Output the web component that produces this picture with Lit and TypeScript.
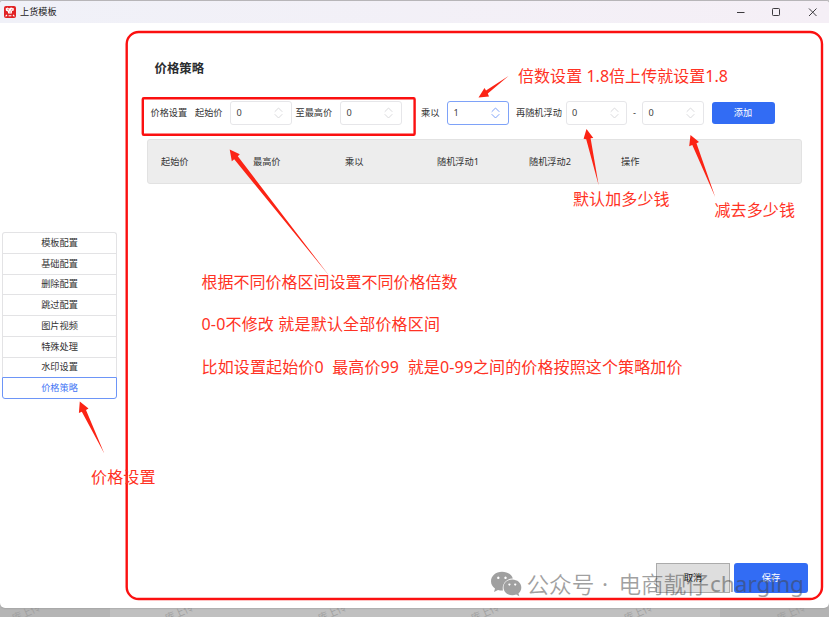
import { LitElement, html, svg, css } from "lit";
import { customElement, property } from "lit/decorators.js";

@customElement("number-box")
class NumberBox extends LitElement {
  @property() value = "0";
  @property({ type: Boolean, reflect: true }) active = false;

  static styles = css`
    :host {
      box-sizing: border-box;
      display: flex;
      align-items: center;
      justify-content: space-between;
      width: 61.5px;
      height: 24px;
      flex: none;
      padding: 0 7.5px 0 5.5px;
      border: 1px solid #e6e6e9;
      border-radius: 3px;
      background: #fff;
      color: #444;
      --arrow: #d9d9dc;
    }
    :host([active]) {
      border-color: #7ea2f8;
      --arrow: #7ea2f8;
    }
    .value {
      padding-top: 1px;
    }
    .arrows {
      width: 9px;
      height: 12px;
      fill: none;
      stroke: var(--arrow);
      stroke-width: 1;
    }
  `;

  render() {
    return html`<span class="value">${this.value}</span>
      <svg class="arrows" viewBox="0 0 9 12">
        <path d="M0.7 4.8 L4.5 1 L8.3 4.8 M0.7 7.2 L4.5 11 L8.3 7.2" />
      </svg>`;
  }
}

interface Note {
  x: number;
  y: number;
  width: number;
  text: string;
}

const MENU = ["模板配置", "基础配置", "删除配置", "跳过配置", "图片视频", "特殊处理", "水印设置", "价格策略"];
const COLUMNS = ["起始价", "最高价", "乘以", "随机浮动1", "随机浮动2", "操作"];
const NOTES: Note[] = [
  { x: 518, y: 82, width: 210, text: "倍数设置 1.8倍上传就设置1.8" },
  { x: 573, y: 205, width: 96.5, text: "默认加多少钱" },
  { x: 714.5, y: 216, width: 80.5, text: "减去多少钱" },
  { x: 201.5, y: 287.5, width: 256, text: "根据不同价格区间设置不同价格倍数" },
  { x: 201.5, y: 330, width: 238.5, text: "0-0不修改 就是默认全部价格区间" },
  { x: 201.5, y: 373, width: 481, text: "比如设置起始价0\u00a0 最高价99\u00a0 就是0-99之间的价格按照这个策略加价" },
  { x: 91, y: 483, width: 64.5, text: "价格设置" },
];
const ARROWS = [
  "M478.5 97.5 L484.5 88 L486 90.6 L508.5 76 L487.8 93.5 L489 96.5 Z",
  "M229.7 149.5 L239.8 154.2 L237.8 156.2 L329 275.5 L234.2 159.2 L231.8 161.2 Z",
  "M586.5 129 L593.3 138 L590.6 138.3 L598.7 185.5 L586.2 139.2 L583.6 138.8 Z",
  "M690.5 135 L699 142 L696.5 143.2 L715.2 197 L692.3 145 L689.2 146.2 Z",
  "M79.8 401.6 L88.5 408.6 L86 410 L104.3 453.5 L81.8 411.8 L78.9 413 Z",
];

@customElement("app-root")
class AppRoot extends LitElement {
  static styles = css`
    :host {
      display: block;
      position: relative;
      box-sizing: border-box;
      width: 829px;
      height: 617px;
      padding-top: 1px;
      overflow: hidden;
      background: linear-gradient(#c8c5c9 0 3px, #bdbdbd 3px);
      font-family: "Noto Sans", "Noto Sans CJK SC", sans-serif;
      font-size: 9.2px;
      line-height: 1.4;
      color: #333;
    }
    .backdrop {
      position: absolute;
      inset: 607px 0 0 0;
      width: 829px;
      height: 10px;
    }
    .shade {
      font-size: 10px;
      fill: #a0a0a0;
    }
    .window {
      position: relative;
      display: flex;
      flex-direction: column;
      height: 606.5px;
      overflow: hidden;
      background: #fff;
      border-radius: 3px 3px 5px 5px;
      box-shadow: 0 0 2px #888;
    }
    .titlebar {
      display: flex;
      align-items: center;
      height: 22px;
      flex: none;
      padding: 0 10px 0 4px;
      background: linear-gradient(90deg, #f0f1f8, #f5eff6);
      color: #222;
    }
    .logo {
      width: 12px;
      height: 12px;
      margin-right: 4px;
    }
    .controls {
      width: 82px;
      height: 12px;
      margin-left: auto;
      fill: none;
      stroke: #3c3a3e;
      stroke-width: 1;
    }
    .body {
      display: flex;
      flex: 1;
      min-height: 0;
    }
    .menu {
      box-sizing: border-box;
      display: flex;
      flex-direction: column;
      width: 115px;
      height: 167px;
      margin: 209px 0 0 2px;
      flex: none;
    }
    .item {
      box-sizing: border-box;
      display: flex;
      flex: 1;
      align-items: center;
      justify-content: center;
      padding-top: 1px;
      border: 1px solid #e3e3e5;
      border-bottom: none;
    }
    .item:first-child {
      border-radius: 3px 3px 0 0;
    }
    .item:last-child {
      border: 1px solid #6d95f7;
      border-radius: 0 0 3px 3px;
      color: #4476f5;
    }
    .page {
      display: flex;
      flex: 1;
      flex-direction: column;
      margin-left: 30px;
      padding: 36px 21px 14.5px 0;
    }
    .heading {
      margin: 0 0 0 7.5px;
      font-size: 12.4px;
      font-weight: 700;
      line-height: 20px;
      color: #2b2d30;
    }
    .form {
      display: flex;
      align-items: center;
      height: 24px;
      margin: 22px 0 14px;
      padding-left: 3.5px;
      white-space: nowrap;
    }
    .label {
      flex: none;
      padding-top: 1px;
    }
    .l1 { width: 44.5px; }
    .l2 { width: 35px; }
    .l3 { width: 44.5px; margin-left: 4px; }
    .l4 { width: 26px; margin-left: 19.5px; }
    .l5 { width: 49.5px; margin-left: 7.5px; }
    .dash { width: 15px; text-align: center; }
    .add {
      box-sizing: border-box;
      display: flex;
      align-items: center;
      justify-content: center;
      width: 63px;
      height: 22px;
      margin-left: 8px;
      padding-top: 1px;
      border-radius: 3px;
      background: #326cf4;
      color: #fff;
    }
    .thead {
      box-sizing: border-box;
      display: grid;
      grid-template-columns: repeat(6, 92px);
      align-items: center;
      width: 655px;
      height: 45px;
      padding: 2px 0 0 13px;
      border: 1px solid #e2e2e2;
      border-radius: 3px;
      background: #ededed;
    }
    .footer {
      display: flex;
      gap: 4px;
      justify-content: flex-end;
      margin-top: auto;
    }
    .btn {
      box-sizing: border-box;
      display: flex;
      align-items: center;
      justify-content: center;
      width: 74px;
      height: 30px;
      padding-top: 1px;
    }
    .cancel {
      border: 1px solid #ababab;
      background: #dedede;
      color: #111;
    }
    .save {
      border-radius: 3px;
      background: #326cf4;
      color: #fff;
    }
    .overlay {
      position: absolute;
      inset: 0;
      width: 829px;
      height: 617px;
      pointer-events: none;
    }
    .frame {
      fill: none;
      stroke: #fb1010;
      stroke-width: 2.4;
    }
    .note {
      font-size: 16px;
      fill: #ff3224;
    }
    .arrow {
      fill: #fb2415;
    }
    .mark {
      font-size: 22.6px;
      fill: #444;
    }
    .mark-cjk {
      font-family: "Noto Sans CJK SC", sans-serif;
      font-weight: 350;
    }
    .brand {
      opacity: 0.5;
    }
  `;

  render() {
    return html`
      <svg class="backdrop" viewBox="0 0 829 10">
        <rect width="110" height="10" fill="#b5b5b5" />
        <rect x="110" width="610" height="10" fill="#c0c0c0" />
        <rect x="720" width="109" height="10" fill="#b3b3b3" />
        ${[14, 167, 320, 473, 626, 779].map(
          (x) => svg`<text class="shade" transform="translate(${x} 15) rotate(-24)">库上传</text>`
        )}
      </svg>
      <div class="window">
        <div class="titlebar">
          <svg class="logo" viewBox="0 0 12 12">
            <rect width="12" height="12" rx="2" fill="#e12224" />
            <path d="M1.6 2.4 L3.6 1.4 L5 2.6 L7 1.6 L9.8 2.2 L9.8 4.4 L8 5 L7.8 7.4 L4.2 7.4 L3.8 5.4 L2 4.8 Z" fill="#fff" />
            <path d="M3.4 3.2 L5 4.2 M8.4 3.2 L6.8 4.4 M5.4 6 H6.8" stroke="#e12224" stroke-width="0.7" />
            <path d="M1.6 10.4 L3 8.8 M4.6 9.8 H7.4 M9 8.8 L10.4 10.4" fill="none" stroke="#fff" stroke-width="1.1" />
          </svg>
          <span>上货模板</span>
          <svg class="controls" viewBox="0 0 82 12">
            <path d="M0 6.5 H7.5 M72 2.5 L79.5 10 M79.5 2.5 L72 10" />
            <rect x="35.5" y="2.5" width="7" height="7" rx="0.8" />
          </svg>
        </div>
        <div class="body">
          <nav class="menu">${MENU.map((m) => html`<div class="item">${m}</div>`)}</nav>
          <main class="page">
            <h1 class="heading">价格策略</h1>
            <div class="form">
              <span class="label l1">价格设置</span>
              <span class="label l2">起始价</span>
              <number-box></number-box>
              <span class="label l3">至最高价</span>
              <number-box></number-box>
              <span class="label l4">乘以</span>
              <number-box value="1" active></number-box>
              <span class="label l5">再随机浮动</span>
              <number-box></number-box>
              <span class="label dash">-</span>
              <number-box></number-box>
              <span class="add">添加</span>
            </div>
            <div class="thead">${COLUMNS.map((c) => html`<span>${c}</span>`)}</div>
            <div class="footer">
              <div class="btn cancel">取消</div>
              <div class="btn save">保存</div>
            </div>
          </main>
        </div>
      </div>
      <svg class="overlay" viewBox="0 0 829 617">
        <rect class="frame" x="126.7" y="32" width="695.3" height="567" rx="12" />
        <rect class="frame" x="142.8" y="98.2" width="271.8" height="36.6" rx="1" />
        ${ARROWS.map((d) => svg`<path class="arrow" d=${d} />`)}
        ${NOTES.map(
          (n) => svg`<text class="note" x=${n.x} y=${n.y} textLength=${n.width}>${n.text}</text>`
        )}
        <g class="brand">
          <path
            fill="#444"
            fill-rule="evenodd"
            d="M502 571.8 C495.8 571.8 491 576 491 581.2 C491 584.2 492.5 586.7 495 588.5 L494 592 L498 589.9 C499.7 590.4 501.5 590.6 503 590.5 C501.5 584 506.5 578.4 512.8 578.6 C511.8 574.5 507.3 571.8 502 571.8 Z M498.3 576.6 a1.2 1.2 0 1 0 0.01 0 Z M505.5 576.6 a1.2 1.2 0 1 0 0.01 0 Z"
          />
          <path
            fill="#444"
            fill-rule="evenodd"
            d="M512.3 579.6 C507.3 579.6 503.5 583.2 503.5 587.4 C503.5 591.8 507.5 595.2 512.3 595.2 C513.7 595.2 515 594.9 516.2 594.5 L519.3 596.2 L518.5 593.3 C520.3 591.8 521.3 589.7 521.3 587.4 C521.3 583.2 517.3 579.6 512.3 579.6 Z M509.4 583.4 a1 1 0 1 0 0.01 0 Z M515.2 583.4 a1 1 0 1 0 0.01 0 Z"
          />
          <text class="mark mark-cjk" x="526.5" y="592.5">公众号</text>
          <text class="mark" x="602" y="592">·</text>
          <text class="mark mark-cjk" x="618.5" y="592.5">电商靓仔</text>
          <text class="mark" x="710" y="592" textLength="94">charging</text>
        </g>
      </svg>
    `;
  }
}
